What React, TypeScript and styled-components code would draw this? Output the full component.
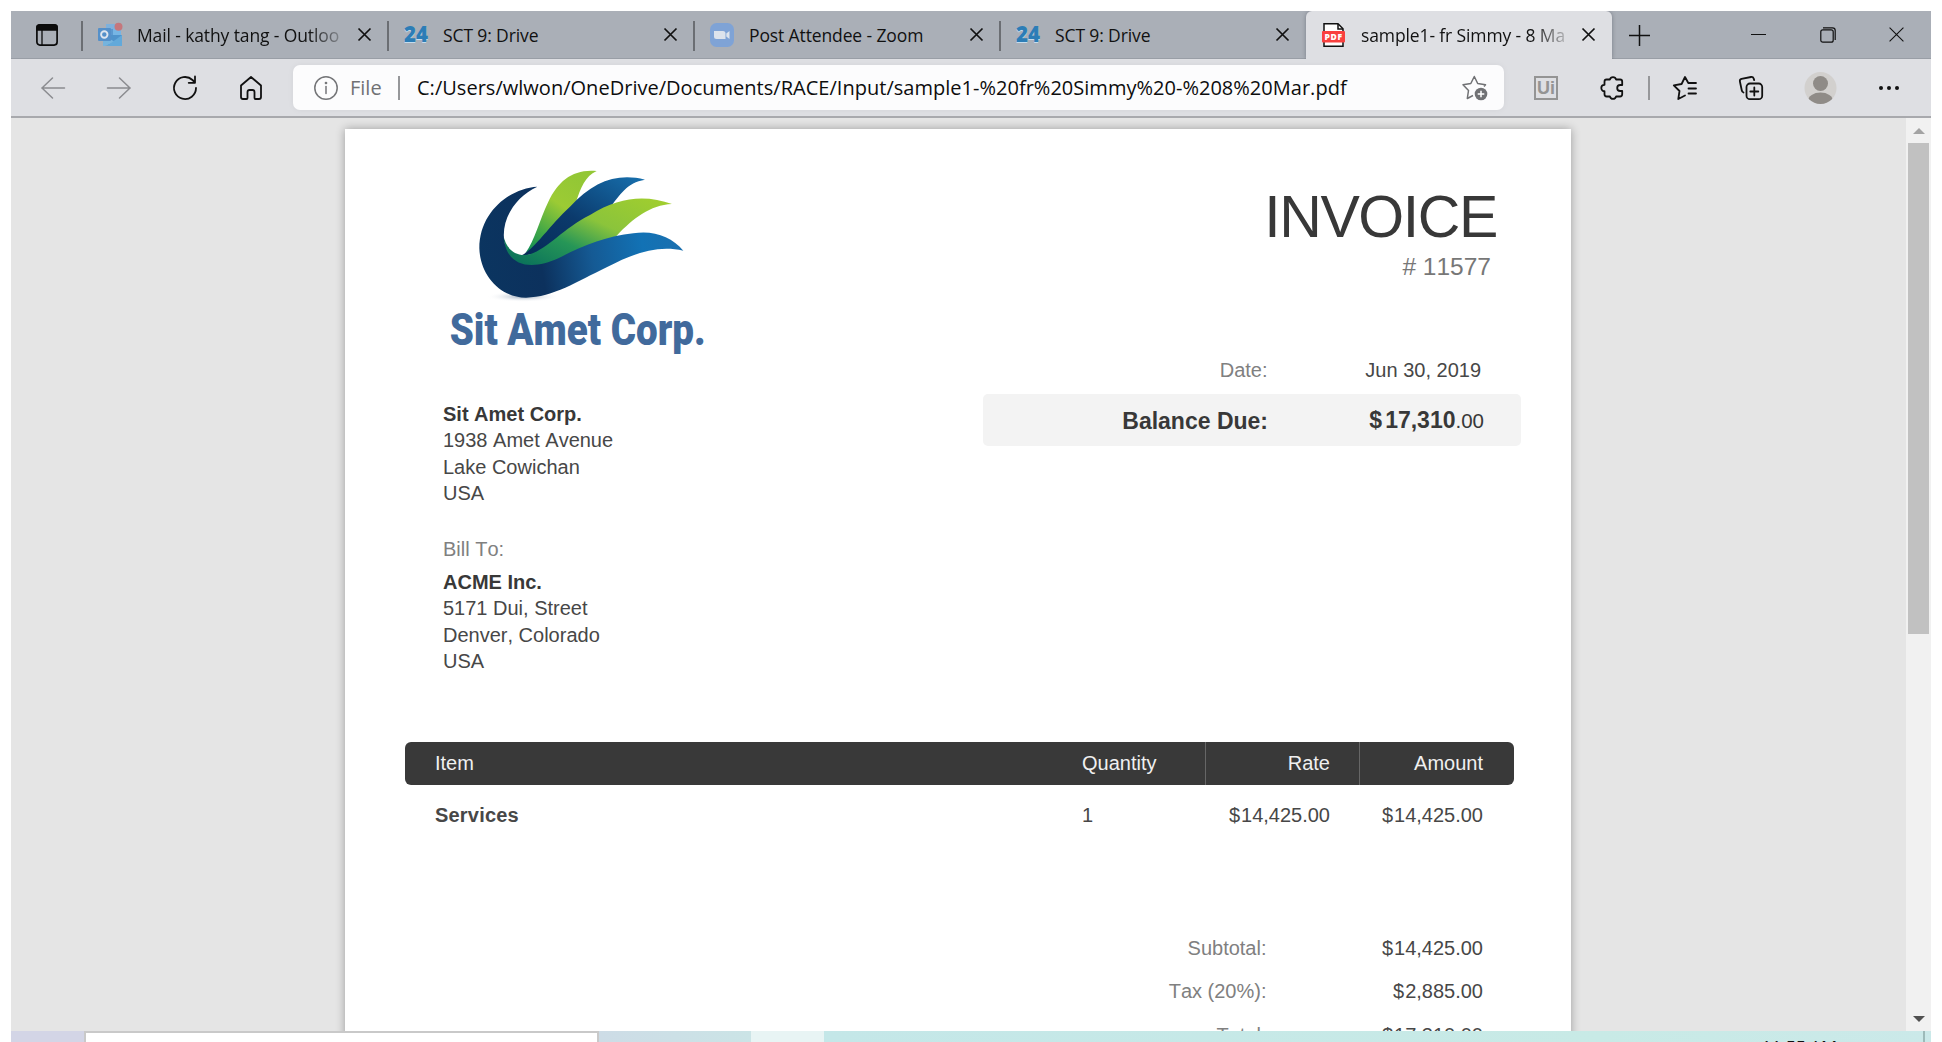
import React from 'react';
import styled, { createGlobalStyle } from 'styled-components';

const GlobalStyle = createGlobalStyle`
  html, body { margin: 0; padding: 0; background: #fff; }
  body { overflow: hidden; }
  svg { display: block; flex: none; overflow: visible; }
`;

const ui = `'Open Sans', 'Noto Sans', sans-serif`;
const doc = `'Liberation Sans', Arial, sans-serif`;

const Screen = styled.div`
  width: 1942px;
  height: 1042px;
  box-sizing: border-box;
  padding: 11px 11px 0;
  overflow: hidden;
  display: flex;
  flex-direction: column;
  background: #fff;
`;

/* ---------- tab strip ---------- */
const TabStrip = styled.div`
  height: 48px;
  flex: none;
  display: flex;
  background: #aaafb7;
  box-shadow: inset 0 -1px 0 #999ea6;
`;
const TabActions = styled.div`
  width: 71px;
  display: flex;
  align-items: center;
  padding-left: 25px;
  box-sizing: border-box;
`;
const TabItem = styled.div<{ $active?: boolean }>`
  width: 306px;
  height: 48px;
  box-sizing: border-box;
  display: flex;
  align-items: center;
  padding: 0 17px 1px ${p => (p.$active ? 16 : 0)}px;
  background: ${p => (p.$active ? '#dedfe3' : 'transparent')};
  border-radius: ${p => (p.$active ? '6px 6px 0 0' : '0')};
  box-shadow: ${p => (p.$active ? '0 0 4px rgba(60,65,75,.45)' : 'none')};
  clip-path: ${p => (p.$active ? 'inset(0 -5px 0 -5px)' : 'none')};
`;
const TabEdge = styled.div`
  width: 2px;
  height: 30px;
  margin: 3px 15px 0 -1px;
  background: #6b6e73;
`;
const TabTitle = styled.div<{ $fade?: boolean }>`
  flex: 1;
  min-width: 0;
  margin: 0 12px 0 15px;
  font: 400 17.5px/26px ${ui};
  letter-spacing: -.12px;
  white-space: nowrap;
  color: #111;
  ${p => p.$fade && 'mask-image: linear-gradient(90deg, #000 82%, rgba(0, 0, 0, .15) 99%);'}
`;
const NewTab = styled.div`
  width: 54px;
  display: flex;
  align-items: center;
  justify-content: center;
`;
const WindowButtons = styled.div`
  margin-left: auto;
  display: flex;
  align-items: center;
  gap: 53.5px;
  padding: 0 27px 1px 0;
`;

/* ---------- toolbar ---------- */
const Toolbar = styled.div`
  height: 57px;
  flex: none;
  display: flex;
  align-items: center;
  padding-left: 30px;
  background: #dedfe3;
`;
const NavGroup = styled.div`
  display: flex;
  gap: 42px;
`;
const AddressBar = styled.div`
  width: 1211px;
  height: 45px;
  margin: 0 30px;
  box-sizing: border-box;
  padding: 0 16px 0 21px;
  display: flex;
  align-items: center;
  border-radius: 7px;
  background: #fcfcfd;
  box-shadow: 0 0 6px rgba(0, 0, 0, .05);
`;
const Scheme = styled.span`
  width: 35px;
  margin-left: 12px;
  font: 400 20px/28px ${ui};
  color: #707174;
`;
const Divider = styled.span<{ $gap?: string }>`
  width: 2px;
  height: 24px;
  margin: ${p => p.$gap ?? '0'};
  background: #96979a;
`;
const Url = styled.span`
  flex: 1;
  margin-left: 17px;
  font: 400 20px/28px ${ui};
  letter-spacing: .02px;
  white-space: nowrap;
  color: #0d0d0d;
`;
const Extensions = styled.div`
  display: flex;
  align-items: center;
  gap: 43px;
`;
const UiBadge = styled.div`
  width: 24px;
  height: 24px;
  box-sizing: border-box;
  border: 2px solid #949494;
  display: flex;
  align-items: center;
  justify-content: center;
  font: 700 18px/18px ${doc};
  color: #949494;
`;
const AppMenu = styled.div`
  display: flex;
  align-items: center;
  gap: 42px;
`;

/* ---------- viewer ---------- */
const Viewer = styled.div`
  height: 915px;
  flex: none;
  display: flex;
  justify-content: space-between;
  box-sizing: border-box;
  border-top: 2px solid #a8a9ad;
  background: #e5e5e5;
  overflow: hidden;
`;
const Page = styled.div`
  width: 1226px;
  height: 1600px;
  margin: 11px 0 0 334px;
  background: #fff;
  box-shadow: 0 0 9px rgba(0, 0, 0, .32);
  font: 400 20px/26.5px ${doc};
  font-kerning: none;
  color: #474747;
`;
const PageTop = styled.div`
  height: 613px;
  display: flex;
  justify-content: space-between;
`;
const Issuer = styled.div`
  padding: 11px 0 0 75px;
`;
const Address = styled.div<{ $mt: number }>`
  margin: ${p => p.$mt}px 0 0 23px;
`;
const Strong = styled.div`
  font-weight: 700;
  color: #383838;
`;
const Muted = styled.div`
  color: #808080;
`;
const Summary = styled.div`
  width: 538px;
  margin-right: 50px;
  padding-top: 57.6px;
`;
const Title = styled.div`
  font-size: 59px;
  line-height: 60px;
  letter-spacing: -1.4px;
  padding-right: 24px;
  text-align: right;
  color: #383838;
`;
const InvoiceNumber = styled.div`
  margin-top: 5.4px;
  padding-right: 30px;
  text-align: right;
  font-size: 24.5px;
  line-height: 30px;
  color: #777;
`;
const DateRow = styled.div`
  margin-top: 75px;
  padding-right: 40px;
  display: grid;
  grid-template-columns: 284.5px 1fr;
  text-align: right;
`;
const Balance = styled.div`
  height: 52px;
  box-sizing: border-box;
  margin-top: 10.7px;
  padding: 2px 37px 0 0;
  border-radius: 5px;
  background: #f3f3f3;
  display: grid;
  grid-template-columns: 285px 1fr;
  align-items: center;
  text-align: right;
  font-size: 23px;
  font-weight: 700;
  color: #383838;
`;
const Currency = styled.span<{ $gap?: number }>`
  margin-right: ${p => p.$gap ?? 1}px;
`;
const Cents = styled.span`
  font-size: 20.5px;
  font-weight: 400;
`;
const Table = styled.div`
  width: 1109px;
  margin-left: 60px;
`;
const Row = styled.div<{ $head?: boolean }>`
  display: grid;
  grid-template-columns: 647px 153px 154px 155px;
  align-items: center;
  height: ${p => (p.$head ? 43 : 26.5)}px;
  margin-top: ${p => (p.$head ? 0 : 17)}px;
  border-radius: 6px;
  background: ${p => (p.$head ? '#393939' : 'transparent')};
  color: ${p => (p.$head ? '#f0f0f0' : '#474747')};
`;
const Cell = styled.div<{ $right?: number; $rule?: boolean; $bold?: boolean }>`
  height: 100%;
  box-sizing: border-box;
  display: flex;
  align-items: center;
  padding: 0 ${p => p.$right ?? 30}px 0 30px;
  justify-content: ${p => (p.$right ? 'flex-end' : 'flex-start')};
  border-left: ${p => (p.$rule ? '1px solid #666' : 'none')};
  font-weight: ${p => (p.$bold ? 700 : 400)};
  letter-spacing: ${p => (p.$bold ? '.2px' : 'normal')};
`;
const Totals = styled.div`
  margin: 106.5px 88px 0 0;
  display: grid;
  grid-template-columns: 921.5px 1fr;
  row-gap: 16.9px;
  text-align: right;
`;
const Scrollbar = styled.div`
  width: 25px;
  display: flex;
  flex-direction: column;
  align-items: center;
  background: #f1f1f1;
`;
const Arrow = styled.div<{ $down?: boolean }>`
  border: 6px solid transparent;
  border-top: ${p => (p.$down ? '6px solid #505050' : 'none')};
  border-bottom: ${p => (p.$down ? 'none' : '6px solid #a3a3a3')};
  margin: ${p => (p.$down ? 'auto 0 9px' : '10px 0 9px')};
`;
const Thumb = styled.div`
  width: 21px;
  height: 491px;
  background: #c1c1c1;
`;

/* ---------- taskbar ---------- */
const Taskbar = styled.div`
  height: 11px;
  flex: none;
  display: flex;
  overflow: hidden;
`;
const Strip = styled.div<{ $w: number; $bg: string }>`
  width: ${p => p.$w}px;
  background: ${p => p.$bg};
`;
const SearchBox = styled.div`
  width: 515px;
  box-sizing: border-box;
  border: 2px solid #c9c9c9;
  border-bottom: 0;
  background: #fff;
`;
const Tray = styled.div`
  flex: 1;
  display: flex;
  justify-content: flex-end;
  background: linear-gradient(90deg, #c4e7e8, #c8eae6 70%, #cbe9e9);
`;
const Clock = styled.div`
  margin: 6.4px 86px 0 0;
  font: 400 18px/20px ${ui};
  letter-spacing: -.3px;
  color: #111;
`;
const ShowDesktop = styled.div`
  width: 8px;
  box-sizing: border-box;
  border-left: 2px solid #9dbab9;
`;

const CloseIcon = ({ size = 13, w = 1.7 }: { size?: number; w?: number }) => (
  <svg width={size} height={size} viewBox="0 0 13 13" stroke="#111" strokeWidth={w} fill="none">
    <path d="M.5 .5 12.5 12.5M12.5 .5 .5 12.5" />
  </svg>
);

const Stroke = ({ children, w = 24, color = '#111', sw = 1.7 }: { children: React.ReactNode; w?: number; color?: string; sw?: number }) => (
  <svg width={w} height={24} viewBox={`0 0 ${w} 24`} fill="none" stroke={color} strokeWidth={sw} strokeLinecap="round" strokeLinejoin="round">
    {children}
  </svg>
);

const OutlookIcon = () => (
  <svg width="24" height="24" viewBox="0 0 24 24">
    <path d="M8 1h15v12H8z" fill="#7eb1dc" />
    <path d="M8 6h7v7H8z" fill="#5b98cf" />
    <path d="M15 6h8v7h-8z" fill="#76b5e4" />
    <path d="M5 12h19v10.500H5z" fill="#4f93cb" />
    <path d="M5 12l12 7-10 4H5z" fill="#75b4de" />
    <path d="M24 12v11H9z" fill="#62a9da" />
    <rect y="5" width="13" height="13" rx="1" fill="#5590c9" />
    <circle cx="6.300" cy="11.500" r="3.200" fill="none" stroke="#dfe6ef" strokeWidth="1.900" />
    <circle cx="20.500" cy="3.800" r="4" fill="#c5777c" />
  </svg>
);
const TwentyFourIcon = () => (
  <svg width="24" height="24" viewBox="0 0 24 24">
    <text x="0" y="20" textLength="24" lengthAdjust="spacingAndGlyphs" fontFamily="Open Sans" fontWeight="800" fontSize="22" fill="#c5dcec" aria-hidden="true">24</text>
    <text x="0" y="18.700" textLength="24" lengthAdjust="spacingAndGlyphs" fontFamily="Open Sans" fontWeight="800" fontSize="22" fill="#2c7db6">24</text>
  </svg>
);
const ZoomIcon = () => (
  <svg width="24" height="24" viewBox="0 0 24 24">
    <rect width="24" height="24" rx="6.500" fill="#7fa3d6" />
    <path d="M4 8h9q2.500 0 2.500 2.500V16H6.500Q4 16 4 13.500zM16.300 10.500 19.500 8v8l-3.200-2.500z" fill="#dde3ec" />
  </svg>
);
const PdfIcon = () => (
  <svg width="24" height="24" viewBox="0 0 24 24">
    <path d="M2 .8h14l5 5v17.400H2z" fill="#fff" stroke="#111" strokeWidth="1.500" />
    <path d="M16 1v5h5" fill="none" stroke="#111" strokeWidth="1.500" />
    <rect x="0" y="8" width="23" height="11.500" rx="1" fill="#f9403f" />
    <text x="2.600" y="16.800" textLength="17.500" fontFamily="Open Sans" fontWeight="800" fontSize="8.500" fill="#fff">PDF</text>
  </svg>
);

const Logo = () => (
  <svg width="320" height="240" viewBox="0 0 960 720">
    <defs>
      <linearGradient id="leafTop" x1="0" y1="1" x2=".6" y2="0"><stop offset="0" stopColor="#0b8a58" /><stop offset=".3" stopColor="#43a846" /><stop offset=".65" stopColor="#9ccb34" /><stop offset="1" stopColor="#93c735" /></linearGradient>
      <linearGradient id="bladeTop" x1="0" y1="1" x2="1" y2="0"><stop offset="0" stopColor="#062b57" /><stop offset=".45" stopColor="#0b3a6c" /><stop offset="1" stopColor="#1770ae" /></linearGradient>
      <linearGradient id="leafLow" x1="0" y1=".9" x2="1" y2="0"><stop offset="0" stopColor="#056b5b" /><stop offset=".35" stopColor="#269657" /><stop offset=".6" stopColor="#8bc43b" /><stop offset="1" stopColor="#a3cf2d" /></linearGradient>
      <linearGradient id="body" x1="180" y1="400" x2="790" y2="300" gradientUnits="userSpaceOnUse"><stop offset="0" stopColor="#0b3560" /><stop offset=".3" stopColor="#0c315d" /><stop offset=".55" stopColor="#155a94" /><stop offset=".8" stopColor="#1272b5" /><stop offset="1" stopColor="#1b6fae" /></linearGradient>
      <radialGradient id="shade"><stop offset="0" stopColor="#9aa9ba" /><stop offset="1" stopColor="#fff" stopOpacity="0" /></radialGradient>
    </defs>
    <ellipse cx="310" cy="470" rx="110" ry="16" fill="url(#shade)" />
    <path d="M316 340C345 300 358 240 385 185C415 122 460 86 530 93C495 108 482 145 468 186C440 235 390 300 316 340z" fill="url(#leafTop)" />
    <path d="M305 346C345 325 390 255 450 200C520 125 590 98 675 119C620 128 600 165 568 205C500 235 440 270 395 310C370 335 335 348 305 346z" fill="url(#bladeTop)" />
    <path d="M250 285C258 330 290 352 330 343C385 325 430 265 510 225C600 168 680 165 756 192C690 195 640 235 590 287C550 310 460 350 420 375C360 405 290 400 258 360z" fill="url(#leafLow)" />
    <path d="M352 140C270 145 178 215 178 325C180 400 235 472 318 473C400 472 470 425 560 382C640 340 710 315 790 332C755 290 700 270 640 280C560 288 480 320 415 355C350 385 285 385 260 330C232 260 275 175 352 140z" fill="url(#body)" />
    <text x="89" y="616" textLength="768" lengthAdjust="spacingAndGlyphs" fontFamily="Roboto" fontWeight="900" fontSize="134" fill="#416a9c">Sit Amet Corp.</text>
  </svg>
);

const tabs = [
  { title: 'Mail - kathy tang - Outloo', icon: <OutlookIcon />, fade: true },
  { title: 'SCT 9: Drive', icon: <TwentyFourIcon /> },
  { title: 'Post Attendee - Zoom', icon: <ZoomIcon /> },
  { title: 'SCT 9: Drive', icon: <TwentyFourIcon /> },
  { title: 'sample1- fr Simmy - 8 Ma', icon: <PdfIcon />, fade: true, active: true },
];

const Money = ({ children }: { children: string }) => (
  <div><Currency>$</Currency>{children}</div>
);

export default function App() {
  return (
    <Screen>
      <GlobalStyle />
      <TabStrip>
        <TabActions>
          <svg width="22" height="22" viewBox="0 0 22 22" fill="none" stroke="#0b0b0b" strokeWidth="1.700">
            <rect x=".9" y=".9" width="20.200" height="20.200" rx="3" />
            <path d="M1 3q0-2 2-2h16q2 0 2 2v3H1z" fill="#0b0b0b" />
            <path d="M6 6v15" strokeWidth="1.300" />
          </svg>
        </TabActions>
        {tabs.map((tab, i) => (
          <TabItem key={i} $active={tab.active}>
            {!tab.active && <TabEdge />}
            {tab.icon}
            <TabTitle $fade={tab.fade}>{tab.title}</TabTitle>
            <CloseIcon />
          </TabItem>
        ))}
        <NewTab>
          <svg width="21" height="21" viewBox="0 0 21 21" stroke="#111" strokeWidth="1.500"><path d="M10.500 0v21M0 10.500h21" /></svg>
        </NewTab>
        <WindowButtons>
          <svg width="15" height="15" viewBox="0 0 15 15" stroke="#111"><path d="M0 7.500h15" /></svg>
          <svg width="16" height="16" viewBox="0 0 16 16" fill="none" stroke="#111" strokeWidth="1.200">
            <rect x=".8" y="2.800" width="12.400" height="12.400" rx="2" />
            <path d="M3 .8h9.500q2.700 0 2.700 2.700V13" />
          </svg>
          <CloseIcon size={15} w={0.95} />
        </WindowButtons>
      </TabStrip>

      <Toolbar>
        <NavGroup>
          <Stroke color="#8b8c90" sw={1.5}><path d="M23.500 12H.8M11.500 2 1 12l10.500 10" /></Stroke>
          <Stroke color="#8b8c90" sw={1.5}><path d="M.5 12h22.700M12.500 2 23 12 12.500 22" /></Stroke>
          <Stroke sw={1.8}><path d="M23 12A11 11 0 1 1 19.500 4L22 6.500M22 .5v6.300h-6.300" /></Stroke>
          <Stroke sw={1.8}><path d="M2 9.500 12 1l10 8.500V21q0 2-2 2h-3.500q-1 0-1-1v-6q0-2-2-2h-3q-2 0-2 2v6q0 1-1 1H4q-2 0-2-2z" /></Stroke>
        </NavGroup>
        <AddressBar>
          <Stroke color="#747578" sw={1.5}>
            <circle cx="12" cy="12" r="11.200" /><path d="M12 10.500v7" /><circle cx="12" cy="7" r=".6" fill="#747578" />
          </Stroke>
          <Scheme>File</Scheme>
          <Divider $gap="0 0 0 13px" />
          <Url>C:/Users/wlwon/OneDrive/Documents/RACE/Input/sample1-%20fr%20Simmy%20-%208%20Mar.pdf</Url>
          <svg width="26" height="26" viewBox="0 0 26 26" fill="none" stroke="#707174" strokeWidth="1.500" strokeLinejoin="round">
            <path d="M11 20.500 5.300 23.500 6.500 15.500 1 9.800 8.800 8.500 12.300 1.500 15.700 8.500 23.500 9.800 22 11.500" />
            <circle cx="19" cy="19" r="6.300" fill="#707174" stroke="none" />
            <path d="M19 15.700v6.600M15.700 19h6.600" stroke="#fff" />
          </svg>
        </AddressBar>
        <Extensions>
          <UiBadge>Ui</UiBadge>
          <Stroke sw={1.8}>
            <path d="M5.500 3.500h3.400a3.200 3.200 0 0 1 6.200 0h4Q21.200 3.500 21.200 5.700V9h-2a3 3 0 0 0 0 6h2v3.300q0 2.200-2.200 2.200h-3.900a3.200 3.200 0 0 1-6.200 0H5.700q-2.200 0-2.200-2.200V15.200a3.200 3.200 0 0 1 0-6.400V5.700Q3.500 3.500 5.500 3.500z" />
          </Stroke>
        </Extensions>
        <Divider $gap="0 23px 0 23px" />
        <AppMenu>
          <Stroke sw={1.8}>
            <path d="M12 19.500 5.300 23 6.500 15 .8 9.300 8.600 8 12 1l3.300 6H23M15.500 12.500H23M15.500 17.500H23" />
          </Stroke>
          <Stroke sw={1.8}>
            <rect x="7.500" y="7.500" width="15.700" height="15.700" rx="3.500" /><path d="M15.300 11.500v8M11.300 15.500h8M4.500 16.500Q3 16 2.700 14L.9 5.500q-.4-2 1.600-2.600L12 1q2-.4 2.700 1.600l.5 1.500" />
          </Stroke>
          <svg width="31" height="32" viewBox="0.500 0 31 32">
            <defs><clipPath id="avatarClip"><circle cx="16" cy="16" r="16" /></clipPath></defs>
            <circle cx="16" cy="16" r="16" fill="#d2d0ce" />
            <circle cx="16" cy="11.500" r="7.500" fill="#8f8b87" />
            <ellipse cx="16" cy="29" rx="12.500" ry="8.500" fill="#8f8b87" clipPath="url(#avatarClip)" />
          </svg>
          <svg width="22" height="24" viewBox="0 0 22 24" fill="#111"><circle cx="3" cy="12" r="2" /><circle cx="11" cy="12" r="2" /><circle cx="19" cy="12" r="2" /></svg>
        </AppMenu>
      </Toolbar>

      <Viewer>
        <Page>
          <PageTop>
            <Issuer>
              <Logo />
              <Address $mt={20.5}>
                <Strong>Sit Amet Corp.</Strong>
                <div>1938 Amet Avenue</div>
                <div>Lake Cowichan</div>
                <div>USA</div>
              </Address>
              <Address $mt={29.5}>
                <Muted>Bill To:</Muted>
              </Address>
              <Address $mt={6}>
                <Strong>ACME Inc.</Strong>
                <div>5171 Dui, Street</div>
                <div>Denver, Colorado</div>
                <div>USA</div>
              </Address>
            </Issuer>
            <Summary>
              <Title>INVOICE</Title>
              <InvoiceNumber># 11577</InvoiceNumber>
              <DateRow><Muted>Date:</Muted><div>Jun 30, 2019</div></DateRow>
              <Balance>
                <div>Balance Due:</div>
                <div><Currency $gap={3}>$</Currency>17,310<Cents>.00</Cents></div>
              </Balance>
            </Summary>
          </PageTop>
          <Table>
            <Row $head>
              <Cell>Item</Cell><Cell>Quantity</Cell><Cell $right={29} $rule>Rate</Cell><Cell $right={31} $rule>Amount</Cell>
            </Row>
            <Row>
              <Cell $bold>Services</Cell><Cell>1</Cell><Cell $right={29}><Money>14,425.00</Money></Cell><Cell $right={31}><Money>14,425.00</Money></Cell>
            </Row>
          </Table>
          <Totals>
            <Muted>Subtotal:</Muted><Money>14,425.00</Money>
            <Muted>Tax (20%):</Muted><Money>2,885.00</Money>
            <Muted>Total:</Muted><Money>17,310.00</Money>
          </Totals>
        </Page>
        <Scrollbar>
          <Arrow />
          <Thumb />
          <Arrow $down />
        </Scrollbar>
      </Viewer>

      <Taskbar>
        <Strip $w={73} $bg="#d3d5e6" />
        <SearchBox />
        <Strip $w={152} $bg="linear-gradient(90deg, #cddce6, #cbe4e6)" />
        <Strip $w={73} $bg="#e8f4f4" />
        <Tray>
          <Clock>11:55 AM</Clock>
          <ShowDesktop />
        </Tray>
      </Taskbar>
    </Screen>
  );
}
